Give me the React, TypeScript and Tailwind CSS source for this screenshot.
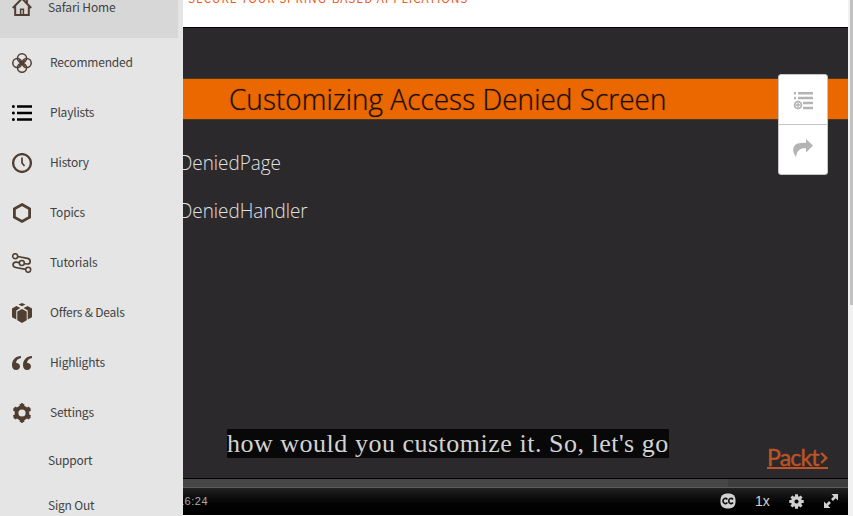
import React from "react";

const BROWN = "#4f3e31";

function Icon({ children, className = "h-5 w-5" }: { children: React.ReactNode; className?: string }) {
  return (
    <svg viewBox="0 0 20 20" className={`${className} shrink-0`} fill="none" stroke={BROWN} strokeWidth="1.5">
      {children}
    </svg>
  );
}

const HomeIcon = () => (
  <Icon>
    <path d="M0.800 11 10 1.500 19.200 11M3.200 9.500v8.500h13.600V9.500M14.900 1.500v5" strokeWidth="2" />
    <path d="M8.600 18v-5.700h2.800V18" strokeWidth="1.500" />
  </Icon>
);

const RecommendedIcon = () => (
  <Icon>
    <circle cx="10" cy="5.300" r="4.500" />
    <circle cx="10" cy="14.700" r="4.500" />
    <circle cx="5.300" cy="10" r="4.500" />
    <circle cx="14.700" cy="10" r="4.500" />
    <path d="m7 7 6 6M13 7l-6 6" strokeWidth="1.300" />
  </Icon>
);

const PlaylistsIcon = () => (
  <Icon>
    <path d="M5 3.500h15M5 10h15M5 16.500h15" stroke="#000" strokeWidth="2.600" />
    <g fill="#000" stroke="none">
      <circle cx="1.400" cy="3.500" r="1.500" />
      <circle cx="1.400" cy="10" r="1.500" />
      <circle cx="1.400" cy="16.500" r="1.500" />
    </g>
  </Icon>
);

const HistoryIcon = () => (
  <Icon>
    <circle cx="10" cy="10" r="8.900" strokeWidth="2.300" />
    <path d="M10 4.500V10l2.500 3" strokeWidth="1.700" />
  </Icon>
);

const TopicsIcon = () => (
  <Icon>
    <path d="m10 1.600 7.600 4.200v8.400L10 18.400l-7.600-4.200V5.800z" strokeWidth="2.800" />
  </Icon>
);

const TutorialsIcon = () => (
  <Icon>
    <circle cx="3.200" cy="3.200" r="2.500" />
    <circle cx="9.800" cy="10" r="2.500" />
    <circle cx="16.200" cy="16.800" r="2.500" />
    <path d="m5.700 3.500 9.800 1.800c3.800.8 3.400 6-.5 5.700l-2.700-.4M7.300 9.600l-3-.4C.2 8.700 0 13.800 3.800 14.500l9.900 1.900" strokeWidth="1.700" />
  </Icon>
);

const OffersIcon = () => (
  <Icon>
    <g fill={BROWN} stroke="none">
      <path d="M6.500 1.600 10 0l3.500 1.600L10 3.200z" />
      <path d="M0 5.600 4.400 3.100 8.400 5 4.300 7.500v8.900L0 14.300zM20 5.600l-4.400-2.500-4 1.900 4.100 2.500v8.900l4.300-2.100z" />
      <path d="M5.300 8.600 10 6l4.700 2.600v8.700L10 20l-4.700-2.700z" />
    </g>
  </Icon>
);

const HighlightsIcon = () => (
  <Icon>
    <path
      d="M9 3C3.500 3 0 7 0 12.200 0 15.300 1.600 17 4.100 17c2.200 0 3.900-1.500 3.900-3.700S6.400 9.800 4.100 9.900C4 7.500 5.800 5.600 9 5zM20 3c-5.500 0-9 4-9 9.200 0 3.100 1.600 4.800 4.100 4.800 2.200 0 3.900-1.500 3.900-3.700s-1.600-3.500-3.900-3.400C15 7.500 16.800 5.600 20 5z"
      fill={BROWN}
      stroke="none"
    />
  </Icon>
);

const SettingsIcon = () => (
  <Icon>
    <circle cx="10" cy="10" r="5.500" strokeWidth="3.800" />
    <path d="M10 .9v3M10 16.100v3M2.100 5.450l2.600 1.500M15.300 13.050l2.600 1.500M17.900 5.450l-2.600 1.500M4.700 13.050l-2.600 1.500" strokeWidth="4.600" />
    <path d="M10 1.200v2M10 16.800v2M2.600 5.700l1.500.9M15.900 13.400l1.500.9M17.400 5.700l-1.500.9M4.100 13.400l-1.500.9" strokeWidth="2.400" strokeLinecap="round" />
  </Icon>
);

const items = [
  { label: "Recommended", icon: <RecommendedIcon /> },
  { label: "Playlists", icon: <PlaylistsIcon /> },
  { label: "History", icon: <HistoryIcon /> },
  { label: "Topics", icon: <TopicsIcon /> },
  { label: "Tutorials", icon: <TutorialsIcon /> },
  { label: "Offers & Deals", icon: <OffersIcon /> },
  { label: "Highlights", icon: <HighlightsIcon /> },
  { label: "Settings", icon: <SettingsIcon /> },
];

function Sidebar() {
  return (
    <nav className="h-[516px] w-[183px] shrink-0 overflow-hidden bg-[#e5e5e5] font-['Noto_Sans_CJK_SC',sans-serif] text-[12px] leading-5 tracking-[-0.200px] text-[#424242]">
      <div className="flex h-[38px] w-[178px] items-start bg-[#d7d7d7] pl-3">
        <div className="-mt-[3px] flex items-center gap-4">
          <HomeIcon />
          <span className="tracking-[-0.100px]">Safari Home</span>
        </div>
      </div>
      {items.map((item) => (
        <div key={item.label} className="flex h-[50px] items-center gap-[18px] pl-3">
          {item.icon}
          <span className="pb-[2px]">{item.label}</span>
        </div>
      ))}
      <div className="flex h-[45px] items-center pb-[2px] pl-12">Support</div>
      <div className="flex h-[45px] items-center pb-[2px] pl-12">Sign Out</div>
    </nav>
  );
}

function Actions() {
  return (
    <div className="absolute left-[778px] top-[74px] flex h-[101px] w-[50px] flex-col rounded-[3px] border border-[#c6c6c6] bg-white">
      <button className="flex h-[50px] items-center justify-center border-b border-[#c6c6c6] pt-[3px]">
        <svg viewBox="0 0 20 18" className="h-[18px] w-5" fill="none" stroke="#b4b4b4">
          <path d="M5 1.200h15M5 6h15M10 11h10M10 16h10M1 1.200h2M1 6h2" strokeWidth="2.500" />
          <circle cx="5" cy="13" r="3.400" strokeWidth="1.800" />
          <path d="M5 10.800v4.400M2.800 13h4.400" strokeWidth="1.400" />
        </svg>
      </button>
      <button className="flex h-[49px] items-center justify-center pb-[3px]">
        <svg viewBox="0 0 20 18" className="h-[18px] w-5" fill="#b4b4b4">
          <path d="M13 0l7 6.500-7 7V9.300C7.500 9 4.200 11 3 18 .5 14.500-.7 10.500 1 7.500 3 4.200 7 3.700 13 3.900z" />
        </svg>
      </button>
    </div>
  );
}

function Controls() {
  return (
    <div className="flex h-[27px] items-center bg-gradient-to-b from-[#222] to-black pr-[9px] font-['Liberation_Sans',Arial,sans-serif] text-[#d0d0d0]">
      <span className="-ml-[5px] flex-1 text-[11px] tracking-[0.500px] text-[#aaa]">16:24</span>
      <svg viewBox="0 0 16 16" className="mb-px mr-[19px] h-4 w-4">
        <rect x="0.5" y="0.5" width="15" height="15" rx="6" fill="#d3d3d3" />
        <path d="M7.300 6.400C6 4.600 3 5.400 3 8s3 3.400 4.300 1.600M13 6.400C11.700 4.600 8.700 5.400 8.700 8s3 3.400 4.300 1.600" fill="none" stroke="#111" strokeWidth="1.700" />
      </svg>
      <span className="mr-[19px] w-[15px] text-[14px]">1x</span>
      <svg viewBox="0 0 16 16" className="mr-[19px] h-[15px] w-[15px]" fill="none" stroke="#d0d0d0">
        <circle cx="8" cy="8" r="4" strokeWidth="3.500" />
        <path d="M8 .3v3M8 12.700v3M.3 8h3M12.700 8h3M2.600 2.600l2.100 2.100M11.300 11.300l2.100 2.100M13.400 2.600l-2.100 2.100M4.700 11.300l-2.100 2.100" strokeWidth="3.200" />
      </svg>
      <svg viewBox="0 0 16 16" className="mb-px h-4 w-4" fill="#d0d0d0" stroke="#d0d0d0">
        <path d="M8.500 1H15v6.500zM1 8.500V15h6.500z" stroke="none" />
        <path d="m9 7 4-4M7 9l-4 4" strokeWidth="2.500" />
      </svg>
    </div>
  );
}

function Player() {
  return (
    <section className="flex h-[488px] flex-col overflow-hidden border-t border-black bg-[#2b292c]">
      <div className="mt-[50px] flex h-[42px] shrink-0 items-center border-y border-[#48391f] bg-[#eb6700] pl-[46px] font-['Open_Sans',sans-serif] text-[30px] font-light leading-10 text-[#1a0e06]">
        <span className="origin-left scale-x-[0.933] whitespace-nowrap [text-shadow:0_0_1px_#1a0e0680]">Customizing Access Denied Screen</span>
      </div>
      <div className="-ml-[4px] mt-[19px] origin-left scale-x-[0.944] font-['Open_Sans',sans-serif] text-[20px] font-light leading-[48px] text-[#e2e2e2]">
        <p>DeniedPage</p>
        <p>DeniedHandler</p>
      </div>
      <div className="mt-auto flex h-[49px] shrink-0 items-start justify-between pl-11 pr-5">
        <p className="h-[29px] whitespace-nowrap bg-[#080808] font-['Liberation_Serif',serif] text-[26px] leading-[29px] tracking-[0.510px] text-[#d2d2d2]">
          how would you customize it. So, let&apos;s go
        </p>
        <div className="mt-[18px] flex h-[22px] w-[61px] items-center justify-between border-b-2 border-[#bd5426] font-['Lato',sans-serif] text-[23px] leading-5 text-[#bd5426]">
          <span className="w-[53px] tracking-[-0.800px] [-webkit-text-stroke:0.4px_#bd5426]">Packt</span>
          <svg viewBox="0 0 8 12" className="mt-[2px] h-3 w-2 shrink-0" fill="none" stroke="#bd5426" strokeWidth="2.4">
            <path d="m1.200 1 5 5-5 5" />
          </svg>
        </div>
      </div>
      <div className="flex h-[10px] shrink-0 border-b border-t border-b-[#5c5c5c] border-t-black bg-[#3e3e3e]">
        <div className="w-[545px] bg-[#464646]" />
      </div>
      <Controls />
    </section>
  );
}

export default function App() {
  return (
    <div className="relative flex h-[516px] w-[853px] overflow-hidden bg-white">
      <Sidebar />
      <main className="flex w-[665px] shrink-0 flex-col">
        <header className="flex h-[27px] shrink-0 items-start pl-[5px]">
          <h1 className="-mt-[12px] whitespace-nowrap font-['Noto_Sans_CJK_SC',sans-serif] text-[11.700px] leading-5 tracking-[0.960px] text-[#f7561b]">
            SECURE YOUR SPRING-BASED APPLICATIONS
          </h1>
        </header>
        <Player />
      </main>
      <aside className="w-[5px] bg-[#f1f1f1] pl-[2px]">
        <div className="h-[305px] bg-[#c1c1c1]" />
      </aside>
      <Actions />
    </div>
  );
}
